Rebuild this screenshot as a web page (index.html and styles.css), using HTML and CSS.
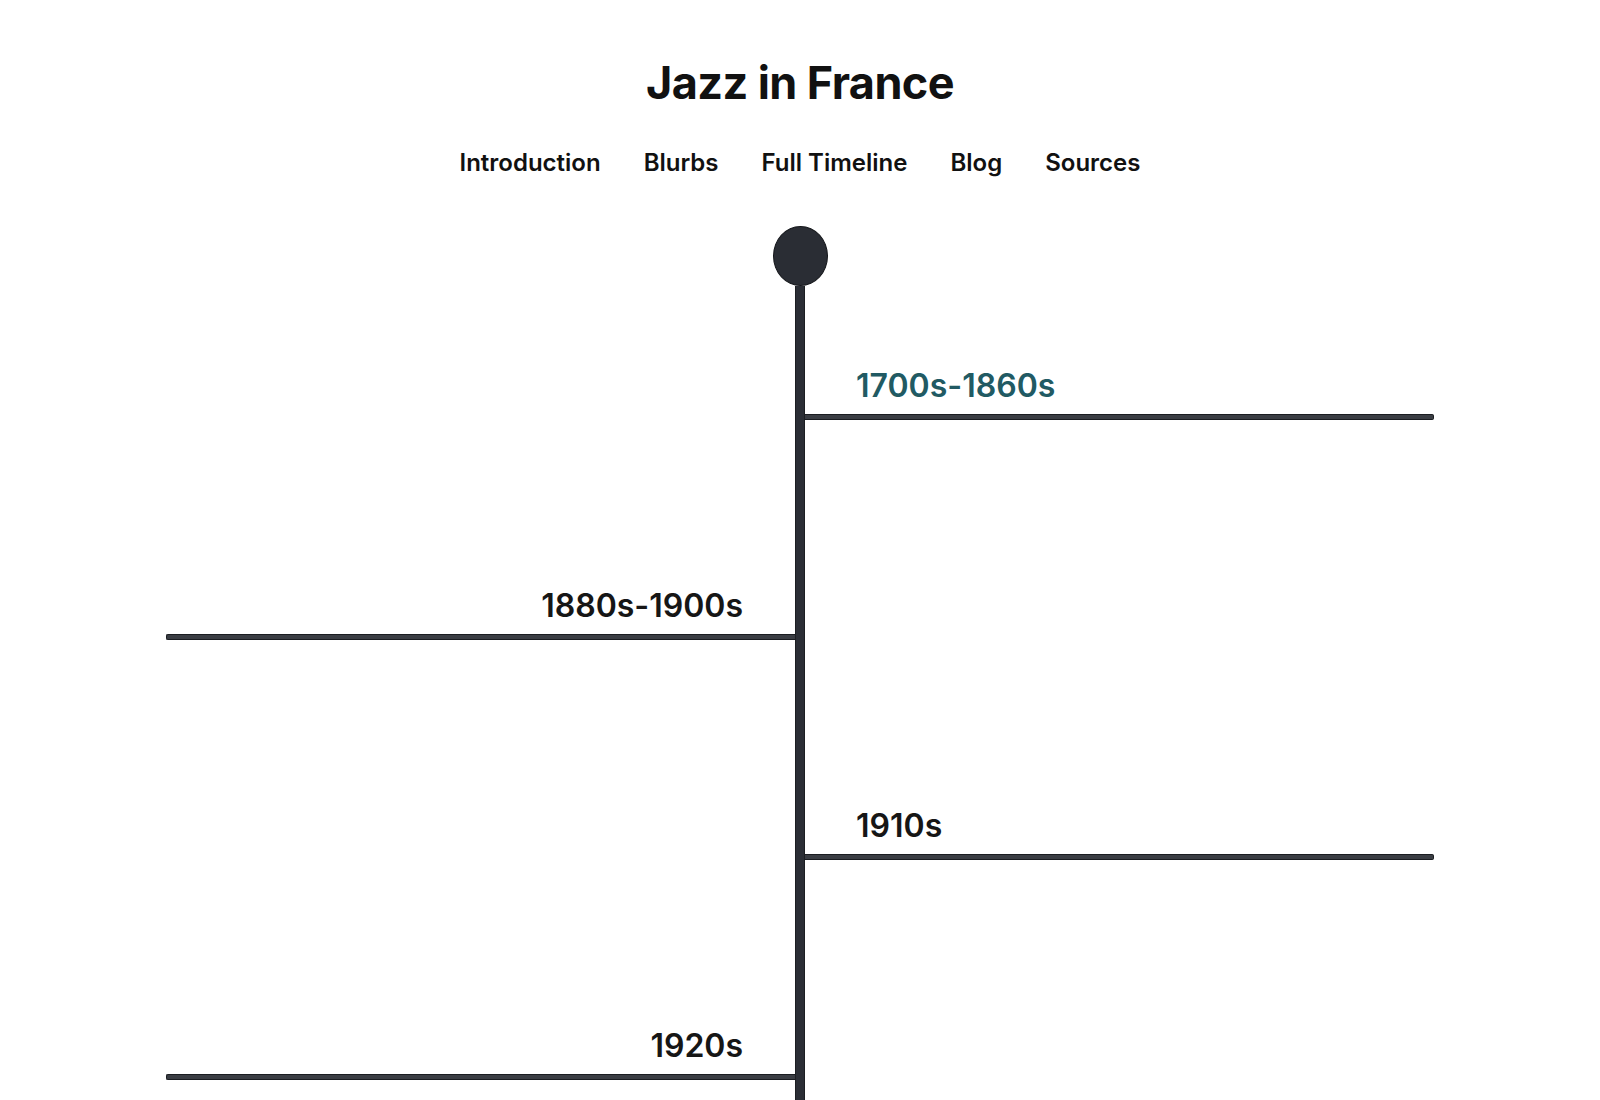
FILE: index.html
```html
<!DOCTYPE html>
<html lang="en">
<head>
<meta charset="utf-8">
<title>Jazz in France</title>
<link rel="stylesheet" href="styles.css">
</head>
<body>
<header class="site-header">
  <h1 class="site-title">Jazz in France</h1>
  <nav class="site-nav">
    <a class="nav-link" href="#">Introduction</a>
    <a class="nav-link" href="#">Blurbs</a>
    <a class="nav-link" href="#">Full Timeline</a>
    <a class="nav-link" href="#">Blog</a>
    <a class="nav-link" href="#">Sources</a>
  </nav>
</header>
<main class="timeline-wrap">
  <div class="timeline-knob"></div>
  <section class="timeline">
    <div class="entry entry-right">
      <a class="entry-label entry-label-active" href="#">1700s-1860s</a>
      <div class="entry-rule"></div>
    </div>
    <div class="entry entry-left">
      <a class="entry-label" href="#">1880s-1900s</a>
      <div class="entry-rule"></div>
    </div>
    <div class="entry entry-right">
      <a class="entry-label" href="#">1910s</a>
      <div class="entry-rule"></div>
    </div>
    <div class="entry entry-left">
      <a class="entry-label" href="#">1920s</a>
      <div class="entry-rule"></div>
    </div>
  </section>
</main>
</body>
</html>
```

FILE: styles.css
```css
html, body {
  margin: 0;
  padding: 0;
  background: #ffffff;
}

body {
  font-family: Inter, "Noto Sans", "Liberation Sans", sans-serif;
  color: #111111;
  padding: 54px 8px 0;
}

.site-header {
  display: flex;
  flex-direction: column;
  align-items: center;
}

.site-title {
  margin: 0;
  font-size: 45px;
  line-height: 58px;
  font-weight: 700;
  letter-spacing: -0.6px;
  color: #111111;
}

.site-nav {
  display: flex;
  gap: 43px;
  margin-top: 36px;
}

.nav-link {
  font-size: 24px;
  line-height: 29px;
  font-weight: 600;
  color: #111111;
  text-decoration: none;
}

.timeline-wrap {
  display: flex;
  flex-direction: column;
  align-items: center;
  margin-top: 49px;
}

.timeline-knob {
  width: 53px;
  height: 58px;
  border-radius: 50%;
  background: #2a2d34;
  border: 1px solid #15171b;
}

.timeline {
  width: 80%;
  padding-bottom: 200px;
  background:
    linear-gradient(to right, #1c1e22 0, #1c1e22 1px, #2b2e35 1px, #2b2e35 9px, #1c1e22 9px, #1c1e22 10px)
    center top / 10px 100% no-repeat;
}

.entry {
  width: calc(50% - 5px);
  display: flex;
  flex-direction: column;
  padding-top: 168px;
}

.entry:first-child {
  padding-top: 82px;
}

.entry-right {
  margin-left: calc(50% + 5px);
  align-items: flex-start;
}

.entry-left {
  align-items: flex-end;
}

.entry-label {
  font-size: 32px;
  line-height: 36px;
  font-weight: 600;
  color: #161616;
  text-decoration: none;
  margin-bottom: 10px;
}

.entry-right .entry-label {
  padding-left: 51px;
}

.entry-left .entry-label {
  padding-right: 52px;
}

.entry-label-active {
  color: #215a63;
}

.entry-rule {
  align-self: stretch;
  height: 4px;
  background: #3a3d43;
  border: 1px solid #1b1d21;
  border-radius: 2px;
}

.entry-right .entry-rule {
  border-left: none;
  border-top-left-radius: 0;
  border-bottom-left-radius: 0;
}

.entry-left .entry-rule {
  border-right: none;
  border-top-right-radius: 0;
  border-bottom-right-radius: 0;
}
```
